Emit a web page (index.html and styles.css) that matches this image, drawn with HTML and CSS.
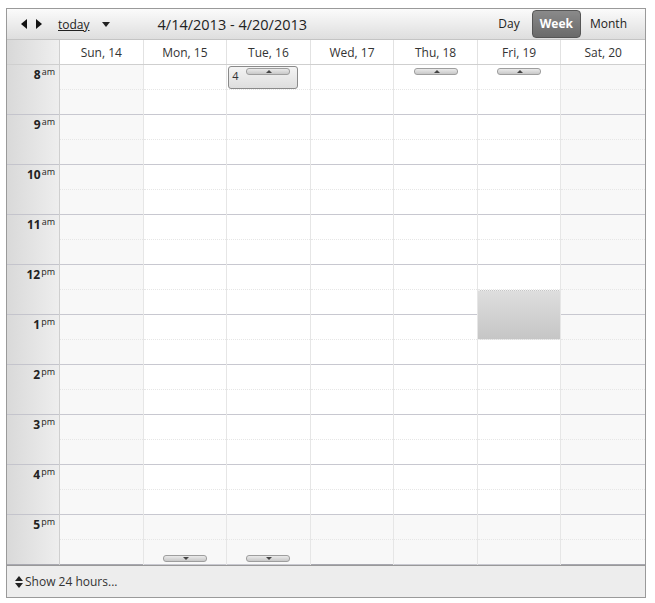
FILE: index.html
```html
<!DOCTYPE html>
<html lang="en">
<head>
    <meta charset="UTF-8">
    <title>Scheduler - Week</title>
    <link rel="stylesheet" href="styles.css">
</head>
<body>
    <div class="scheduler">
        <div class="toolbar">
            <div class="nav">
                <span class="arrow arrow-prev"></span>
                <span class="arrow arrow-next"></span>
                <a class="today" href="#">today</a>
                <span class="caret"></span>
                <span class="range">4/14/2013 - 4/20/2013</span>
            </div>
            <div class="views">
                <span class="view">Day</span>
                <span class="view active">Week</span>
                <span class="view">Month</span>
            </div>
        </div>

        <div class="header-row">
            <div class="corner"></div>
            <div class="day-head">Sun, 14</div>
            <div class="day-head">Mon, 15</div>
            <div class="day-head">Tue, 16</div>
            <div class="day-head">Wed, 17</div>
            <div class="day-head">Thu, 18</div>
            <div class="day-head">Fri, 19</div>
            <div class="day-head">Sat, 20</div>
        </div>

        <div class="grid">
            <div class="times" id="times"></div>
            <div class="day weekend" data-day="0"></div>
            <div class="day" data-day="1"></div>
            <div class="day" data-day="2"></div>
            <div class="day" data-day="3"></div>
            <div class="day" data-day="4"></div>
            <div class="day" data-day="5"></div>
            <div class="day weekend" data-day="6"></div>
        </div>

        <div class="footer">
            <span class="updown"></span>
            <span>Show 24 hours...</span>
        </div>
    </div>

    <script>
        const hours = [['8', 'am'], ['9', 'am'], ['10', 'am'], ['11', 'am'], ['12', 'pm'],
                       ['1', 'pm'], ['2', 'pm'], ['3', 'pm'], ['4', 'pm'], ['5', 'pm']];

        const times = document.getElementById('times');
        hours.forEach(h => {
            const cell = document.createElement('div');
            cell.className = 'time';
            cell.innerHTML = `<b>${h[0]}</b><sup>${h[1]}</sup>`;
            times.appendChild(cell);
        });

        document.querySelectorAll('.day').forEach(col => {
            const day = Number(col.dataset.day);
            hours.forEach((h, i) => {
                const slot = document.createElement('div');
                slot.className = 'hour';
                if (i === 9) slot.classList.add('off');
                slot.innerHTML = '<div class="half"></div><div class="half"></div>';
                col.appendChild(slot);
            });

            // hidden events above / below the visible range
            if (day === 2) {
                col.insertAdjacentHTML('beforeend', '<div class="more-box">4</div>');
            }
            if (day === 2 || day === 4 || day === 5) {
                col.insertAdjacentHTML('beforeend', '<div class="more more-up"></div>');
            }
            if (day === 1 || day === 2) {
                col.insertAdjacentHTML('beforeend', '<div class="more more-down"></div>');
            }
            if (day === 5) {
                col.insertAdjacentHTML('beforeend', '<div class="selection"></div>');
            }
        });
    </script>
</body>
</html>
```

FILE: styles.css
```css
body {
    margin: 0;
    font-family: "Open Sans", "Noto Sans", sans-serif;
    font-size: 12px;
    color: #333;
    background: #fff;
}

.scheduler {
    width: 638px;
    margin: 8px 0 0 6px;
    border: 1px solid #9a9a9a;
}

/* toolbar */
.toolbar {
    height: 30px;
    display: flex;
    align-items: center;
    justify-content: space-between;
    background: linear-gradient(#fbfbfb, #dedede);
    border-bottom: 1px solid #c4c4c4;
}

.nav {
    display: flex;
    align-items: center;
    padding-left: 14px;
}

.arrow {
    width: 0;
    height: 0;
    border-top: 5px solid transparent;
    border-bottom: 5px solid transparent;
}

.arrow-prev {
    border-right: 6px solid #111;
    margin-right: 9px;
}

.arrow-next {
    border-left: 6px solid #111;
    margin-right: 16px;
}

.today {
    color: #222;
    font-size: 12px;
    text-decoration: underline;
}

.caret {
    width: 0;
    height: 0;
    border-left: 4px solid transparent;
    border-right: 4px solid transparent;
    border-top: 5px solid #222;
    margin: 1px 0 0 12px;
}

.range {
    font-size: 14.5px;
    color: #222;
    margin-left: 48px;
}

.views {
    display: flex;
    align-items: center;
    padding-right: 10px;
}

.view {
    padding: 3px 8px 4px;
    color: #222;
    font-size: 12px;
}

.view:first-child {
    padding-right: 11px;
}

.view.active {
    color: #fff;
    font-weight: bold;
    background: linear-gradient(#8a8a8a, #6a6a6a);
    border: 1px solid #555;
    border-radius: 4px;
    padding: 4px 7px 5px;
    margin: 0 1px;
}

/* day header */
.header-row {
    display: grid;
    grid-template-columns: 53px repeat(7, 1fr);
    height: 24px;
    border-bottom: 1px solid #cfcfcf;
}

.corner {
    background: linear-gradient(to right, #d8d8d8, #efefef);
    border-right: 1px solid #cfcfcf;
}

.day-head {
    display: flex;
    align-items: center;
    justify-content: center;
    font-size: 12px;
    color: #333;
    background: #fff;
    border-right: 1px solid #e2e2e2;
}

.day-head:last-child {
    border-right: none;
}

/* time grid */
.grid {
    display: grid;
    grid-template-columns: 53px repeat(7, 1fr);
}

.times {
    background: linear-gradient(to right, #d9d9d9, #eeeeee);
    border-right: 1px solid #cfcfcf;
}

.time {
    height: 49px;
    border-bottom: 1px solid #c4c4cc;
    text-align: right;
    padding-right: 4px;
    color: #222;
}

.time b {
    font-size: 12px;
}

.time sup {
    font-size: 9px;
    vertical-align: 4px;
    margin-left: 1px;
}

.day {
    position: relative;
    border-right: 1px solid #e6e6e6;
}

.day:last-child {
    border-right: none;
}

.hour {
    height: 49px;
    border-bottom: 1px solid #c8c8d0;
    background: #fff;
}

.weekend .hour,
.hour.off {
    background: #f8f8f8;
}

.half {
    height: 24px;
}

.half:first-child {
    height: 24px;
    border-bottom: 1px dotted #e6e6e6;
}

.time:last-child,
.hour:last-child {
    border-bottom: 1px solid #a8a8b0;
}

/* hidden events indicators */
.more {
    position: absolute;
    left: 50%;
    width: 44px;
    height: 7px;
    margin-left: -22px;
    background: linear-gradient(#eaeaea, #c8c8c8);
    border: 1px solid #9e9e9e;
    border-radius: 3px;
    box-sizing: border-box;
}

.more::after {
    content: "";
    position: absolute;
    left: 19px;
    top: 1px;
    border-left: 3px solid transparent;
    border-right: 3px solid transparent;
}

.more-up {
    top: 3px;
}

.more-up::after {
    border-bottom: 3px solid #444;
}

.more-down {
    bottom: 3px;
}

.more-down::after {
    border-top: 3px solid #444;
}

.more-box {
    position: absolute;
    top: 1px;
    left: 1px;
    width: 70px;
    height: 23px;
    box-sizing: border-box;
    border: 1px solid #8a8a8a;
    border-radius: 3px;
    background: linear-gradient(#f4f4f4, #dedede);
    font-size: 11px;
    padding: 1px 0 0 3px;
    color: #333;
}

.selection {
    position: absolute;
    top: 225px;
    left: 0;
    right: 0;
    height: 50px;
    background: linear-gradient(#dedede, #c6c6c6);
    border-top: 1px dotted #eee;
    border-bottom: 1px dotted #eee;
    box-sizing: border-box;
}

/* footer */
.footer {
    height: 31px;
    display: flex;
    align-items: center;
    padding-left: 8px;
    background: #ededed;
    border-top: 1px solid #999;
    font-size: 12px;
    color: #333;
}

.updown {
    position: relative;
    width: 8px;
    height: 12px;
    margin-right: 2px;
}

.updown::before,
.updown::after {
    content: "";
    position: absolute;
    left: 0;
    border-left: 4px solid transparent;
    border-right: 4px solid transparent;
}

.updown::before {
    top: 0;
    border-bottom: 5px solid #222;
}

.updown::after {
    bottom: 0;
    border-top: 5px solid #222;
}
```
